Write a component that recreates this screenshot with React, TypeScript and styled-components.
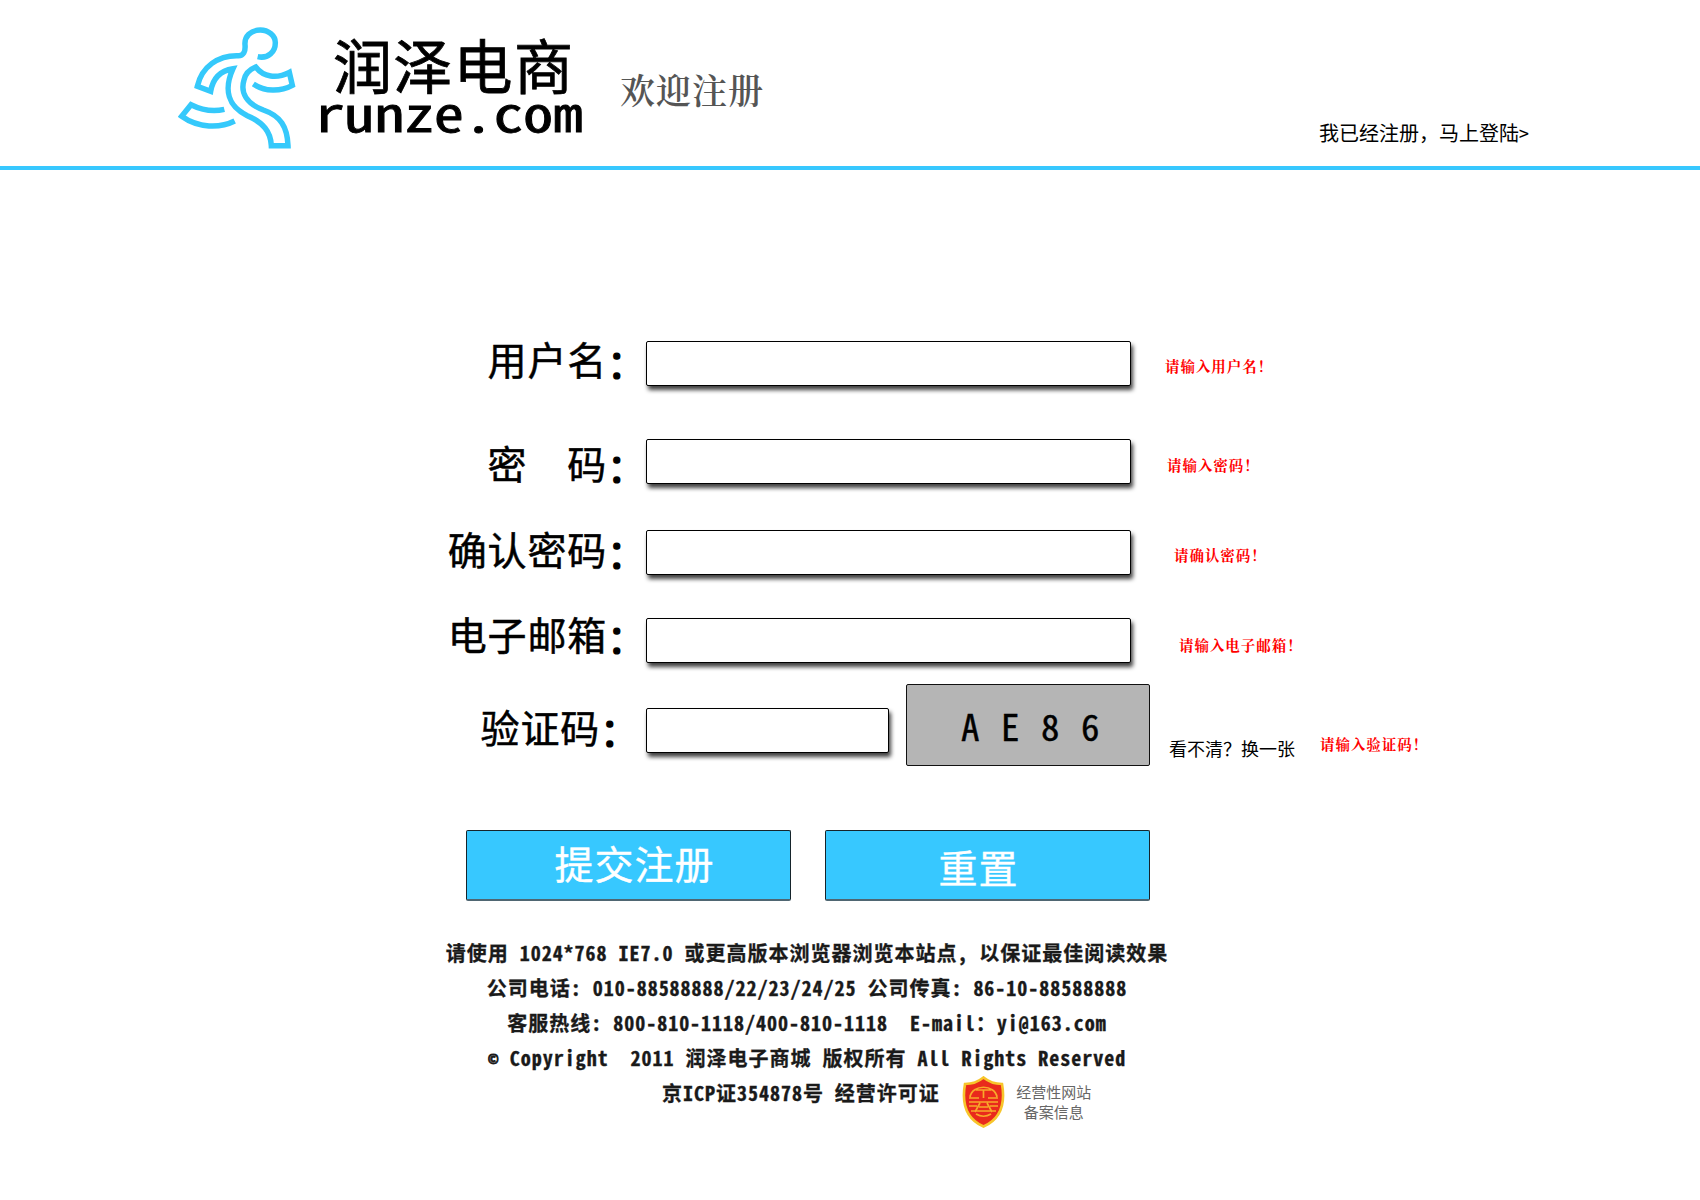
import React from "react";
import styled, { createGlobalStyle } from "styled-components";

const hei = '"Noto Sans Mono CJK SC", "Noto Sans CJK SC", sans-serif';
const song = '"Noto Serif CJK SC", "Noto Sans CJK SC", serif';

const GlobalStyle = createGlobalStyle`
  * { box-sizing: border-box; }
  body { margin: 0; background: #fff; color: #000; font-family: ${hei}; }
  #root { overflow: hidden; }
`;

const Page = styled.div`
  width: 1700px;
  height: 1200px;
  overflow: hidden;
  display: flex;
  flex-direction: column;
`;

const Header = styled.header`
  height: 170px;
  flex: none;
  display: flex;
  align-items: flex-start;
  border-bottom: 4px solid #37c8ff;
  padding-left: 178px;
`;

const Runner = styled.svg`
  width: 118px;
  height: 122px;
  margin-top: 27px;
  flex: none;
`;

const Brand = styled.div`
  width: 270px;
  margin: 32px 0 0 22px;
  flex: none;
  white-space: nowrap;
`;

const BrandName = styled.div`
  padding-left: 15px;
  font-size: 59px;
  letter-spacing: 1.3px;
  line-height: 64px;
  -webkit-text-stroke: 0.8px #000;
`;

const BrandDomain = styled.div`
  width: 225px;
  margin: -4px 0 0 -3px;
  font-size: 48px;
  line-height: 38px;
  transform: scaleX(1.24);
  transform-origin: left;
  -webkit-text-stroke: 0.9px #000;
`;

const Welcome = styled.h1`
  margin: 64px 0 0 32px;
  font: 600 35px/50px ${song};
  letter-spacing: 1px;
  color: #555;
  white-space: nowrap;
`;

const LoginLink = styled.a`
  margin: 118px 171px 0 auto;
  font-size: 20px;
  line-height: 30px;
  white-space: nowrap;
`;

const Form = styled.form`
  padding-top: 171px;
  height: 660px;
  flex: none;
`;

const Row = styled.div<{ $h: number }>`
  display: flex;
  align-items: flex-start;
  height: ${(p) => p.$h}px;
`;

const Label = styled.label<{ $top: number; $right?: number }>`
  width: 646px;
  flex: none;
  margin-top: ${(p) => p.$top}px;
  padding-right: ${(p) => p.$right ?? 0}px;
  display: flex;
  justify-content: flex-end;
  white-space: pre;
  font-size: 39px;
  letter-spacing: 0.8px;
  line-height: 40px;
  -webkit-text-stroke: 0.5px #000;
`;

const Colon = styled.span`
  width: 39px;
  padding-top: 3px;
  -webkit-text-stroke: 1.4px #000;
`;

const Field = styled.input<{ $w?: number; $top?: number }>`
  width: ${(p) => p.$w ?? 485}px;
  height: 45px;
  flex: none;
  margin: ${(p) => p.$top ?? 0}px 0 0;
  padding: 0 10px;
  border: 1px solid #000;
  border-radius: 2px;
  background: #fff;
  box-shadow: 2px 4px 4px rgba(0, 0, 0, 0.75);
  font: 24px ${hei};
  outline: none;
`;

const Hint = styled.span<{ $left: number; $top: number }>`
  margin: ${(p) => p.$top}px 0 0 ${(p) => p.$left}px;
  font: 700 14.5px/20px ${song};
  letter-spacing: 0.95px;
  color: #f00;
  white-space: nowrap;
`;

const Captcha = styled.div`
  width: 244px;
  height: 82px;
  flex: none;
  margin-left: 17px;
  border: 1px solid #111;
  border-radius: 2px;
  background: #b5b5b5;
  display: flex;
  justify-content: center;
  padding: 15px 0 0 6px;
  font-size: 37px;
  letter-spacing: 1.5px;
  line-height: 50px;
  white-space: pre;
  -webkit-text-stroke: 0.4px #000;
`;

const Refresh = styled.a`
  margin: 51px 0 0 19px;
  font-size: 18px;
  line-height: 26px;
  white-space: nowrap;
`;

const Buttons = styled.div`
  display: flex;
  gap: 34px;
  padding-left: 466px;
`;

const Button = styled.button<{ $top: number; $left?: number; $right?: number }>`
  width: 325px;
  height: 71px;
  display: flex;
  justify-content: center;
  padding: ${(p) => p.$top}px ${(p) => p.$right ?? 0}px 0 ${(p) => p.$left ?? 0}px;
  border: 1px solid #16242b;
  border-bottom: 2px solid #4f6672;
  border-radius: 2px;
  background: #37c8ff;
  color: #fff;
  font: 39px/40px ${hei};
  letter-spacing: 1px;
  -webkit-text-stroke: 0.4px #fff;
`;

const Footer = styled.footer`
  width: 1614px;
  padding-top: 105px;
  display: flex;
  flex-direction: column;
  align-items: center;
  color: #1a1a1a;
`;

const Line = styled.p`
  margin: 0;
  height: 35px;
  line-height: 35px;
  font-size: 20px;
  font-weight: 700;
  letter-spacing: 0.99px;
  white-space: pre;
  -webkit-text-stroke: 0.3px #1a1a1a;
`;

const CopyrightMark = styled.span`
  display: inline-block;
  width: 11px;
  font-size: 13px;
  line-height: 20px;
  letter-spacing: 0;
  vertical-align: 2px;
  -webkit-text-stroke: 0.8px #1a1a1a;
`;

const LicenseRow = styled.div`
  display: flex;
  align-items: flex-start;
  width: 100%;
  padding-left: 662px;
`;

const Shield = styled.svg`
  width: 43px;
  height: 52px;
  margin: 1px 0 0 22px;
  flex: none;
`;

const Filing = styled.div`
  margin: 7px 0 0 11px;
  width: 76px;
  font-size: 15px;
  line-height: 20px;
  text-align: center;
  color: #666;
  white-space: nowrap;
`;

export default function App() {
  return (
    <Page>
      <GlobalStyle />
      <Header>
        <Runner viewBox="54 51 354 366" fill="none" stroke="#35c9fb" strokeWidth="16.5">
          <path d="M293 140 C325 147 346 125 346 98 C346 77 325 60 301 60 C272 60 253 80 255 104 C257 125 250 137 235 137 C175 135 125 170 112 229 L152 244 C158 208 180 182 219 176 C190 240 205 290 262 317 C310 338 332 365 334 407 L384 407 C382 350 362 318 310 300 C262 282 240 250 252 210 C256 190 270 178 287 171 C310 202 350 207 388 187 L397 226 C360 246 315 245 280 222" />
          <path d="M193 298 C155 307 125 300 93 284 L65 319 C115 355 180 355 224 333" />
        </Runner>
        <Brand>
          <BrandName>润泽电商</BrandName>
          <BrandDomain>runze.com</BrandDomain>
        </Brand>
        <Welcome>欢迎注册</Welcome>
        <LoginLink>我已经注册，马上登陆&gt;</LoginLink>
      </Header>

      <Form>
        <Row $h={98}>
          <Label $top={-3}>用户名<Colon>：</Colon></Label>
          <Field />
          <Hint $left={34} $top={15}>请输入用户名！</Hint>
        </Row>
        <Row $h={91}>
          <Label $top={3}>{"密　码"}<Colon>：</Colon></Label>
          <Field />
          <Hint $left={36} $top={16}>请输入密码！</Hint>
        </Row>
        <Row $h={88}>
          <Label $top={-2}>确认密码<Colon>：</Colon></Label>
          <Field />
          <Hint $left={43} $top={15}>请确认密码！</Hint>
        </Row>
        <Row $h={66}>
          <Label $top={-5}>电子邮箱<Colon>：</Colon></Label>
          <Field />
          <Hint $left={48} $top={17}>请输入电子邮箱！</Hint>
        </Row>
        <Row $h={146}>
          <Label $top={22} $right={7}>验证码<Colon>：</Colon></Label>
          <Field $w={243} $top={24} />
          <Captcha>A E 8 6</Captcha>
          <Refresh>看不清？换一张</Refresh>
          <Hint $left={25} $top={50}>请输入验证码！</Hint>
        </Row>
        <Buttons>
          <Button type="button" $top={11} $left={12}>提交注册</Button>
          <Button type="button" $top={15} $right={18}>重置</Button>
        </Buttons>
      </Form>

      <Footer>
        <Line>请使用 1024*768 IE7.0 或更高版本浏览器浏览本站点, 以保证最佳阅读效果</Line>
        <Line>公司电话: 010-88588888/22/23/24/25 公司传真: 86-10-88588888</Line>
        <Line>{"客服热线: 800-810-1118/400-810-1118  E-mail：yi@163.com"}</Line>
        <Line><CopyrightMark>©</CopyrightMark>{" Copyright  2011 润泽电子商城 版权所有 All Rights Reserved"}</Line>
        <LicenseRow>
          <Line>京ICP证354878号 经营许可证</Line>
          <Shield viewBox="0 0 43 52">
            <path d="M21.5 1.500 C27 6 34 8 40 8 C43 25 41 42 21.500 50.500 C2 42 0 25 3 8 C9 8 16 6 21.500 1.500Z" fill="#e92a1c" stroke="#f7c52b" strokeWidth="2.6" />
            <g fill="none" stroke="#f8a92a" strokeWidth="1.7">
              <path d="M8 21 C10 8 33 8 35 21 M14 14 H29 M21.500 14 V22 M7 22 H17 M26 22 H36 M7 26 H36 M7 30 H15 M28 30 H36 M18 27 L13 36 M25 27 L30 36 M17 31 H26 M9 35 H34 M14 38 C19 41 24 41 29 38" />
            </g>
          </Shield>
          <Filing>经营性网站<br />备案信息</Filing>
        </LicenseRow>
      </Footer>
    </Page>
  );
}
